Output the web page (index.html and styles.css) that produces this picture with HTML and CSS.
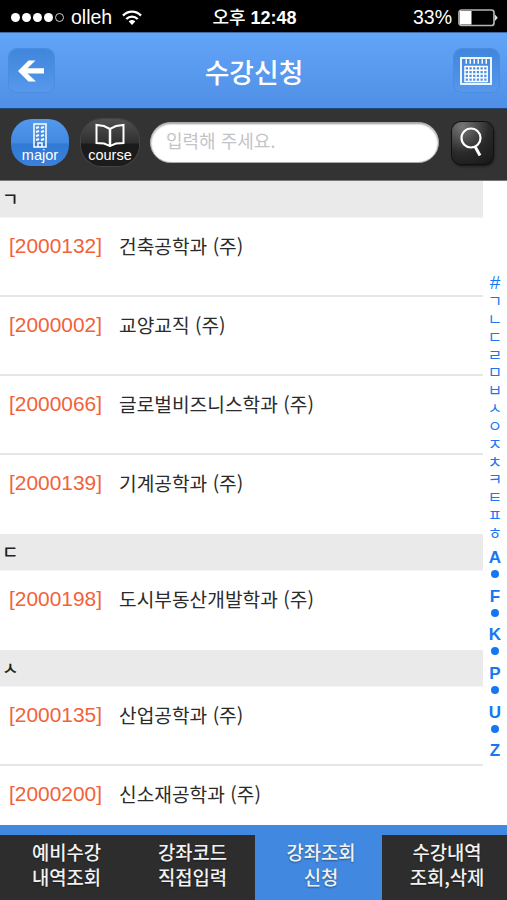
FILE: index.html
```html
<!DOCTYPE html>
<html lang="ko">

<head>
	<meta charset="UTF-8" />
	<meta name="viewport" content="width=device-width, initial-scale=1.0" />
	<title>수강신청</title>
	<link rel="stylesheet" href="styles.css">
</head>

<body>
	<div class="status-bar">
		<div class="status-left">
			<div class="signal"><i></i><i></i><i></i><i></i><i class="empty"></i></div>
			<span class="carrier">olleh</span>
			<svg class="wifi" width="20" height="16" viewBox="0 0 20 16" fill="none" stroke="#fff" stroke-width="2.3">
				<path d="M1 5.6C6 .4 14 .4 19 5.6" />
				<path d="M4.300 9C7.500 5.800 12.500 5.800 15.700 9" />
				<path d="M6.700 11.600C8.500 9.600 11.500 9.600 13.300 11.600L10 15z" fill="#fff" stroke="none" />
			</svg>
		</div>
		<div class="status-time">오후 <b>12:48</b></div>
		<div class="status-right">
			<span>33%</span>
			<svg width="40" height="18" viewBox="0 0 40 18">
				<rect x="1" y="1" width="35" height="15.500" rx="2.500" fill="none" stroke="#b5b5b5" stroke-width="1.700" />
				<rect x="2" y="2" width="11.500" height="13.500" fill="#fff" />
				<path d="M37 5.500L39.800 8.800L37 12z" fill="#ddd" />
			</svg>
		</div>
	</div>

	<header class="nav-bar">
		<button class="nav-button">
			<svg width="26" height="22" viewBox="0 0 26 22">
				<path d="M0 11L10.500 .5H17.500L9.500 8.200H26V13.600H9.500L18 21.500H10.500z" fill="#fff" />
			</svg>
		</button>
		<h1>수강신청</h1>
		<button class="nav-button">
			<svg width="32" height="28" viewBox="0 0 32 28" fill="none" stroke="#fff">
				<rect x="1" y="1" width="30" height="26" stroke-width="1.800" />
				<path d="M5.500 4.500H28" stroke-width="4.500" stroke-dasharray="1.500 2.500" />
				<path d="M4.500 9.500H27.500M4.500 13.250H27.500M4.500 17H27.500M4.500 20.750H27.500M4.500 24.500H27.500" stroke-width="1.400" />
				<path d="M5 9V25M8.700 9V25M12.400 9V25M16.100 9V25M19.800 9V25M23.500 9V25M27.200 9V25" stroke-width="1.400" />
			</svg>
		</button>
	</header>

	<div class="search-bar">
		<button class="type-button active">
			<svg width="14" height="25" viewBox="0 0 14 25" fill="none" stroke="#fff">
				<path d="M1 1H13V24H1z" stroke-width="1.500" />
				<path d="M3 5L6 4M8 5L11 4M3 9L6 8M8 9L11 8M3 13L6 12M8 13L11 12M3 17L6 16M8 17L11 16" stroke-width="2" />
				<path d="M5 24V20H9V24" stroke-width="1.500" />
			</svg>
			<span>major</span>
		</button>
		<button class="type-button">
			<svg width="30" height="24" viewBox="0 0 30 24" fill="none" stroke="#fff" stroke-width="2">
				<path d="M15 5.500L9 2.500L1.500 1.500V19.500L9 20L15 22.500L21 20L28.500 19.500V1.500L21 2.500z" />
				<path d="M15 5.500V23" stroke-width="2.500" />
			</svg>
			<span>course</span>
		</button>
		<input type="text" class="search-field" placeholder="입력해 주세요." />
		<button class="search-button">
			<svg width="22" height="30" viewBox="0 0 22 30" fill="none" stroke="#fff">
				<circle cx="11" cy="11" r="9.500" stroke-width="2.200" />
				<path d="M15 19.500L20 28.500" stroke-width="3" />
			</svg>
		</button>
	</div>

	<main class="content">
		<div class="list">
			<h2>ㄱ</h2>
			<div class="row"><span class="code">[2000132]</span><span>건축공학과 (주)</span></div>
			<div class="row"><span class="code">[2000002]</span><span>교양교직 (주)</span></div>
			<div class="row"><span class="code">[2000066]</span><span>글로벌비즈니스학과 (주)</span></div>
			<div class="row"><span class="code">[2000139]</span><span>기계공학과 (주)</span></div>
			<h2>ㄷ</h2>
			<div class="row"><span class="code">[2000198]</span><span>도시부동산개발학과 (주)</span></div>
			<h2>ㅅ</h2>
			<div class="row"><span class="code">[2000135]</span><span>산업공학과 (주)</span></div>
			<div class="row"><span class="code">[2000200]</span><span>신소재공학과 (주)</span></div>
		</div>
		<nav class="index">
			<span class="hash">#</span>
			<span>ㄱ</span><span>ㄴ</span><span>ㄷ</span><span>ㄹ</span><span>ㅁ</span><span>ㅂ</span><span>ㅅ</span>
			<span>ㅇ</span><span>ㅈ</span><span>ㅊ</span><span>ㅋ</span><span>ㅌ</span><span>ㅍ</span><span>ㅎ</span>
			<b>A</b><i></i><b>F</b><i></i><b>K</b><i></i><b>P</b><i></i><b>U</b><i></i><b>Z</b>
		</nav>
	</main>

	<footer class="tab-bar">
		<a>예비수강<br>내역조회</a>
		<a>강좌코드<br>직접입력</a>
		<a class="active">강좌조회<br>신청</a>
		<a>수강내역<br>조회,삭제</a>
	</footer>
</body>

</html>
```

FILE: styles.css
```css
* {
	box-sizing: border-box;
}

body {
	margin: 0;
	height: 900px;
	display: flex;
	flex-direction: column;
	overflow: hidden;
	background: #fff;
	font-family: "Liberation Sans", "Noto Sans CJK KR", sans-serif;
}

button {
	padding: 0;
	border: none;
	color: #fff;
	font-family: inherit;
}

svg {
	display: block;
}

/* status bar */
.status-bar {
	flex: none;
	height: 32px;
	padding: 3px 9px 0 11px;
	display: grid;
	grid-template-columns: 1fr auto 1fr;
	align-items: center;
	background: #000;
	color: #fff;
	font-size: 19px;
}

.status-left,
.status-right {
	display: flex;
	align-items: center;
}

.status-right {
	justify-content: flex-end;
	gap: 6px;
}

.status-right span {
	font-size: 19.5px;
}

.signal {
	display: flex;
	gap: 2px;
}

.signal i {
	width: 9px;
	height: 9px;
	border-radius: 50%;
	background: #fff;
}

.signal .empty {
	background: none;
	border: 1px solid #ccc;
}

.carrier {
	margin: 0 10px 0 7px;
	font-size: 19.5px;
}

.status-time {
	font-weight: 500;
	font-size: 18px;
	line-height: 28px;
}

/* header */
.nav-bar {
	flex: none;
	height: 76px;
	padding: 0 8px 0 9px;
	display: flex;
	align-items: center;
	justify-content: space-between;
	background: linear-gradient(#62a4f8, #4f90e6);
	border-top: 1px solid #3f6ca8;
}

.nav-bar h1 {
	margin: 0;
	padding-top: 2px;
	color: #fff;
	font-family: "Noto Sans CJK KR", sans-serif;
	font-size: 26.8px;
	font-weight: 500;
	line-height: 40px;
}

.nav-button {
	width: 45px;
	height: 43px;
	display: flex;
	align-items: center;
	justify-content: center;
	border-radius: 8px;
	background: linear-gradient(#3f86dc, #5698ec);
	box-shadow: 0 0 0 1px #4a8cdf;
}

.nav-button:first-child {
	padding-right: 1px;
}

.nav-button:last-child {
	padding-right: 2px;
}

/* search */
.search-bar {
	flex: none;
	height: 73px;
	padding: 0 14px 4px 11px;
	display: flex;
	align-items: center;
	background: #333;
	border-top: 1px solid #24477a;
	border-bottom: 1px solid #777;
}

.type-button {
	width: 58px;
	height: 47px;
	margin-right: 12px;
	padding-top: 4px;
	display: flex;
	flex-direction: column;
	align-items: center;
	border-radius: 21px;
	background: linear-gradient(#505050, #303030 50%, #1a1a1a 54%, #1c1c1c);
	box-shadow: 0 0 0 1px #444;
	font-size: 14.5px;
	line-height: 14px;
}

.type-button svg {
	height: 25px;
}

.type-button.active {
	background: linear-gradient(#5399ec, #4389e2 50%, #3079d4 54%, #3a80dc);
	box-shadow: none;
}

.search-field {
	flex: 1;
	min-width: 0;
	height: 41px;
	margin: 0 13px 0 -1px;
	padding: 0 15px 5px;
	border: 1px solid #aaa;
	border-radius: 21px;
	background: #fff;
	box-shadow: inset 0 1px 2px #999;
	font-family: "Noto Sans CJK KR", sans-serif;
	font-size: 18px;
}

.search-field::placeholder {
	color: #c4c4c8;
}

.search-button {
	width: 41px;
	height: 42px;
	padding: 0 4px 1px 0;
	display: flex;
	align-items: center;
	justify-content: center;
	border-radius: 9px;
	background: radial-gradient(circle at 25% 10%, #777, #2a2a2a 55%, #161616);
	box-shadow: 0 0 0 1px #111, 1px 2px 3px #111;
}

/* department list */
.content {
	flex: 1;
	min-height: 0;
	display: flex;
	overflow: hidden;
}

.list {
	width: 483px;
}

.list h2 {
	height: 37px;
	margin: 0;
	padding-left: 2px;
	background: #eaeaea;
	border-bottom: 1px solid #f4f4f4;
	color: #222;
	font-family: "Noto Sans CJK KR", sans-serif;
	font-size: 18px;
	font-weight: 500;
	line-height: 35px;
}

.row {
	height: 79px;
	padding: 14px 0 0 9px;
	display: flex;
	border-bottom: 2px solid #e6e6e6;
	color: #2b2b2b;
	font-family: "Noto Sans CJK KR", sans-serif;
	font-size: 19.2px;
	line-height: 28px;
}

.row:has(+ h2),
.row:last-child {
	border-bottom: none;
}

.code {
	width: 110px;
	color: #f2623a;
	font-family: "Liberation Sans", sans-serif;
	font-size: 20.9px;
}

.index {
	flex: 1;
	padding-top: 92px;
	display: flex;
	flex-direction: column;
	align-items: center;
	color: #1677f5;
	font-size: 15.5px;
}

.index span {
	height: 17.85px;
	line-height: 17.85px;
}

.index .hash {
	height: 20px;
	font-size: 19px;
	line-height: 20px;
}

.index b {
	height: 22px;
	font-size: 17px;
	line-height: 30px;
}

.index i {
	width: 8px;
	height: 8px;
	margin: 5px 0 3.7px;
	border-radius: 50%;
	background: #1677f5;
}

/* bottom tabs */
.tab-bar {
	flex: none;
	height: 75px;
	display: grid;
	grid-template-columns: 128px 127px 127px 125px;
	background: #2d2d2d;
}

.tab-bar a {
	padding: 4px 0 0 5px;
	border-top: 10px solid #4189e0;
	color: #f2f2f2;
	font-family: "Noto Sans CJK KR", sans-serif;
	font-size: 18.8px;
	font-weight: 500;
	line-height: 25px;
	text-align: center;
	text-shadow: 0 1px 2px #0006;
}

.tab-bar a:nth-child(2) {
	padding-left: 2px;
}

.tab-bar .active {
	background: #4189e0;
}
```
